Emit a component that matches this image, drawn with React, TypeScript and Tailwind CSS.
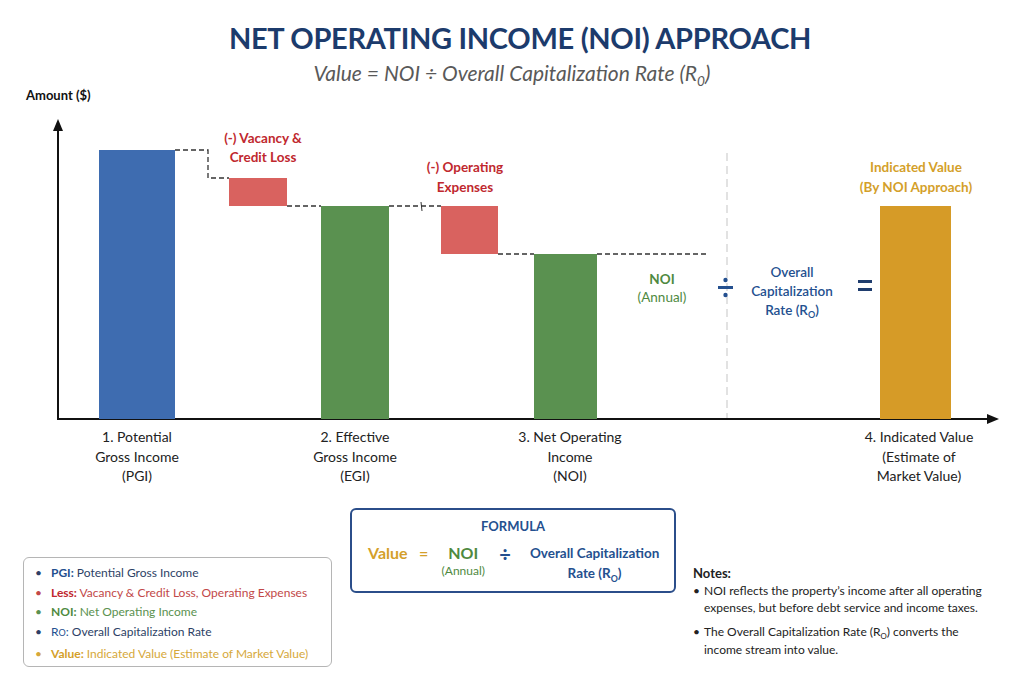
import React from "react";

const NAVY = "#1f3d6e";
const LBL = "#24508f";
const RED = "#c0282e";
const GREEN = "#4f8a3f";
const ORANGE = "#d49f2a";
const FONT = "Lato, 'Open Sans', sans-serif";

function Chart() {
  const dash = { stroke: "#333", strokeWidth: 1.3, strokeDasharray: "5 3", fill: "none" } as const;
  return (
    <svg width="1024" height="400" viewBox="0 88 1024 400" fontFamily={FONT} className="block">
      <text x="26" y="100" fontSize="13" fontWeight="700" fill="#111">Amount ($)</text>
      {/* axes */}
      <line x1="58" y1="128" x2="58" y2="420" stroke="#111" strokeWidth="2" />
      <polygon points="58,119 53,131 63,131" fill="#111" />
      <line x1="57" y1="419" x2="990" y2="419" stroke="#111" strokeWidth="2" />
      <polygon points="999,419 987,414 987,424" fill="#111" />
      {/* separator */}
      <line x1="727" y1="153" x2="727" y2="418" stroke="#cfcfcf" strokeWidth="1.2" strokeDasharray="8 5" />
      {/* bars */}
      <rect x="99" y="150" width="76" height="269" fill="#3e6cb0" />
      <rect x="229" y="178" width="58" height="28" fill="#d9625f" />
      <rect x="321" y="206" width="68" height="213" fill="#5a9150" />
      <rect x="441" y="206" width="57" height="48" fill="#d9625f" />
      <rect x="534" y="254" width="63" height="165" fill="#5a9150" />
      <rect x="880" y="206" width="71" height="213" fill="#d69b27" />
      {/* connectors */}
      <polyline points="175,150 208,150 208,178 229,178" {...dash} />
      <line x1="287" y1="206" x2="321" y2="206" {...dash} />
      <line x1="389" y1="206" x2="441" y2="206" {...dash} />
      <line x1="421" y1="202" x2="422" y2="211" stroke="#333" strokeWidth="1" />
      <line x1="498" y1="254" x2="534" y2="254" {...dash} />
      <line x1="597" y1="254" x2="708" y2="254" {...dash} />
      {/* bar labels */}
      <g fontSize="13.5" fontWeight="700" fill={RED} textAnchor="middle">
        <text x="263" y="143">(-) Vacancy &amp;</text>
        <text x="263" y="162">Credit Loss</text>
        <text x="465" y="172">(-) Operating</text>
        <text x="465" y="192">Expenses</text>
      </g>
      <g fontSize="13.5" fontWeight="700" fill={ORANGE} textAnchor="middle">
        <text x="916" y="172">Indicated Value</text>
        <text x="916" y="192">(By NOI Approach)</text>
      </g>
      <g fill={GREEN} textAnchor="middle" fontSize="13.5">
        <text x="662" y="284" fontWeight="700">NOI</text>
        <text x="662" y="302">(Annual)</text>
      </g>
      <g fill={LBL}>
        <rect x="718" y="286" width="15" height="3" />
        <circle cx="725.5" cy="280" r="2.2" />
        <circle cx="725.5" cy="295" r="2.2" />
        <rect x="858" y="280" width="14" height="3" fill={NAVY} />
        <rect x="858" y="288" width="14" height="3" fill={NAVY} />
      </g>
      <g fill={LBL} textAnchor="middle" fontSize="13.5" fontWeight="600">
        <text x="792" y="277">Overall</text>
        <text x="792" y="296">Capitalization</text>
        <text x="792" y="315">
          Rate (R<tspan fontSize="9" dy="3">O</tspan><tspan dy="-3">)</tspan>
        </text>
      </g>
      {/* x labels */}
      <g fontSize="14" fill="#222" textAnchor="middle">
        <text x="137" y="442">1. Potential</text>
        <text x="137" y="462">Gross Income</text>
        <text x="137" y="481">(PGI)</text>
        <text x="355" y="442">2. Effective</text>
        <text x="355" y="462">Gross Income</text>
        <text x="355" y="481">(EGI)</text>
        <text x="570" y="442">3. Net Operating</text>
        <text x="570" y="462">Income</text>
        <text x="570" y="481">(NOI)</text>
        <text x="919" y="442">4. Indicated Value</text>
        <text x="919" y="462">(Estimate of</text>
        <text x="919" y="481">Market Value)</text>
      </g>
    </svg>
  );
}

function Sub({ children }: { children: React.ReactNode }) {
  return <span className="text-[0.65em] leading-none align-sub">{children}</span>;
}

function Bullet({ className, children }: { className: string; children: React.ReactNode }) {
  return (
    <li className={`flex gap-[9px] ${className}`}>
      <span>•</span>
      <span>{children}</span>
    </li>
  );
}

export default function App() {
  return (
    <div className="w-[1024px] h-[683px] bg-white overflow-hidden font-['Lato','Open_Sans',sans-serif]">
      <div className="h-[88px] pt-[19px] flex flex-col items-center">
        <h1 className="text-[29px] leading-[38px] font-bold tracking-[-0.3px] text-[#1c3b6c] ml-[16px]">
          NET OPERATING INCOME (NOI) APPROACH
        </h1>
        <div className="h-[26px] text-[21px] leading-[26px] italic text-[#595959] mt-[3px]">
          Value = NOI ÷ Overall Capitalization Rate (R<Sub>0</Sub>)
        </div>
      </div>
      <Chart />
      <div className="flex items-start pl-[23px]">
        <div className="w-[309px] h-[110px] mt-[69px] border border-[#b5b5b5] rounded-[6px] pt-[5px] pl-[11px] text-[12px] leading-[19.5px]">
          <ul className="flex flex-col">
            <Bullet className="text-[#2d3f66]">
              <b className="text-[#24508f]">PGI:</b> Potential Gross Income
            </Bullet>
            <Bullet className="text-[#c24848]">
              <b className="text-[#c0282e]">Less:</b> Vacancy &amp; Credit Loss, Operating Expenses
            </Bullet>
            <Bullet className="text-[#5b9150]">
              <b className="text-[#4f8a3f]">NOI:</b> Net Operating Income
            </Bullet>
            <Bullet className="text-[#2d3f66]">
              <span className="text-[#24508f]">R<span className="text-[9px]">O</span>:</span> Overall Capitalization Rate
            </Bullet>
            <Bullet className="text-[#d6a83a] mt-[2px]">
              <b className="text-[#d49f2a]">Value:</b> Indicated Value (Estimate of Market Value)
            </Bullet>
          </ul>
        </div>
        <div className="w-[326px] h-[85px] ml-[18px] mt-[20px] border-2 border-[#2b4e8a] rounded-[6px] flex flex-col items-center">
          <div className="text-[13px] font-bold mt-[8px] leading-[16px] text-[#24508f]">FORMULA</div>
          <div className="flex items-start mt-[9px] w-full pl-[16px]">
            <span className="text-[16px] font-bold leading-[20px] text-[#d49f2a] w-[40px]">Value</span>
            <span className="text-[16px] font-bold leading-[20px] ml-[11px] text-[#d49f2a]">=</span>
            <div className="flex flex-col items-center ml-[7px] w-[56px]">
              <span className="text-[16px] font-bold leading-[20px] text-[#4f8a3f]">NOI</span>
              <span className="text-[12px] leading-[16px] text-[#4f8a3f]">(Annual)</span>
            </div>
            <span className="text-[20px] font-bold leading-[22px] ml-[8px] text-[#24508f]">÷</span>
            <div className="flex flex-col items-center ml-[19px]">
              <span className="text-[13.5px] font-bold leading-[20px] text-[#24508f]">Overall Capitalization</span>
              <span className="h-[20px] text-[13.5px] font-bold leading-[20px] text-[#24508f]">Rate (R<Sub>O</Sub>)</span>
            </div>
          </div>
        </div>
        <div className="ml-[17px] mt-[77px] text-[12px] text-[#222] w-[300px]">
          <div className="font-bold text-[13px] leading-[17px]">Notes:</div>
          <div className="flex gap-[4px] leading-[17px]">
            <span>•</span>
            <span>NOI reflects the property’s income after all operating expenses, but before debt service and income taxes.</span>
          </div>
          <div className="flex gap-[4px] leading-[17px] mt-[7px]">
            <span>•</span>
            <div className="flex flex-col">
              <span>The Overall Capitalization Rate (R<Sub>O</Sub>) converts the</span>
              <span>income stream into value.</span>
            </div>
          </div>
        </div>
      </div>
    </div>
  );
}
